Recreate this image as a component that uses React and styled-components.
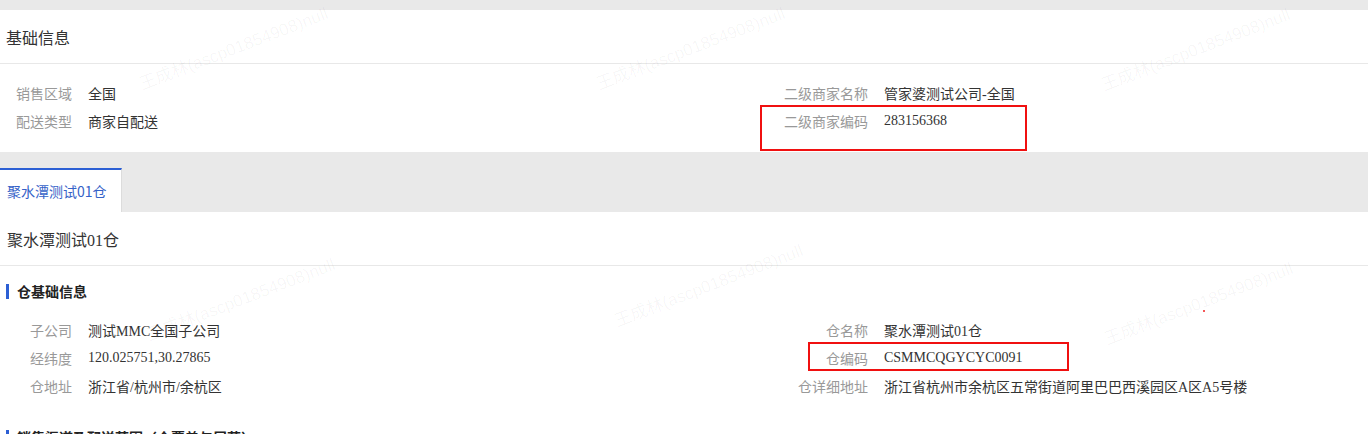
import React from "react";
import styled, { createGlobalStyle } from "styled-components";

const GlobalStyle = createGlobalStyle`
  html, body { margin: 0; padding: 0; }
  body {
    background: #e9e9e9;
    font-family: "Noto Sans CJK SC", "Liberation Sans", sans-serif;
    color: #333;
    overflow: hidden;
  }
`;

const Page = styled.div`
  position: relative;
  padding-top: 10px;
  width: 1368px;
  height: 434px;
  box-sizing: border-box;
  overflow: hidden;
`;

const Card = styled.section`
  background: #fff;
`;

const CardHeader = styled.div`
  height: 53px;
  display: flex;
  align-items: center;
  padding-left: ${(p) => p.$pl || 6}px;
  border-bottom: 1px solid #e8e8e8;
  font-size: 16px;
  font-family: ${(p) =>
    p.$serif
      ? `"Liberation Serif", "Noto Sans CJK SC", serif`
      : `"Noto Sans CJK SC", "Liberation Sans", sans-serif`};
  color: #333;
`;

const InfoGrid = styled.div`
  display: grid;
  grid-template-columns: 684px 684px;
  padding: ${(p) => p.$pt ?? 15}px 0 ${(p) => p.$pb ?? 17}px;
`;

const Column = styled.div`
  display: flex;
  flex-direction: column;
`;

const Item = styled.div`
  display: flex;
  height: 28px;
  align-items: center;
  gap: 16px;
  font-size: 14px;
`;

const Label = styled.span`
  width: ${(p) => p.$w}px;
  flex: none;
  text-align: right;
  color: #999;
  white-space: nowrap;
  font-family: "Noto Sans CJK SC", "Liberation Sans", sans-serif;
`;

const Value = styled.span`
  color: #333;
  white-space: nowrap;
  font-family: "Liberation Serif", "Noto Sans CJK SC", serif;
`;

const TabBar = styled.div`
  height: 60px;
  display: flex;
  align-items: flex-end;
  background: #e9e9e9;
`;

const Tab = styled.div`
  background: #fff;
  border-top: 2px solid #2c5fd4;
  border-right: 1px solid #dcdcdc;
  display: flex;
  align-items: center;
  padding-left: 7px;
  box-sizing: border-box;
  width: 122px;
  height: 44px;
  font-size: 14px;
  color: #3562c8;
  font-family: "Noto Sans CJK SC", "Liberation Sans", sans-serif;
`;

const SectionTitle = styled.div`
  display: flex;
  align-items: center;
  gap: 8px;
  height: 20px;
  margin-top: ${(p) => p.$mt}px;
  padding-left: 6px;
  font-size: 14px;
  font-weight: 700;
  color: #222;
  &::before {
    content: "";
    width: 3px;
    height: 15px;
    background: #2c5fd4;
  }
`;

const Mark = styled.div`
  position: absolute;
  pointer-events: none;
  transform: translate(-50%, -50%) rotate(-21deg);
  font-family: "Liberation Sans", "Noto Sans CJK SC", sans-serif;
  font-size: 17px;
  color: rgba(0, 0, 0, 0.04);
  white-space: nowrap;
`;

const Highlight = styled.div`
  position: absolute;
  pointer-events: none;
  border: 2px solid #f01010;
  box-sizing: border-box;
`;

const Dot = styled.div`
  position: absolute;
  width: 2px;
  height: 2px;
  background: #f02020;
  border-radius: 1px;
`;

const marks = [
  [233, 47],
  [690, 47],
  [1195, 48],
  [240, 298],
  [708, 284],
  [1198, 302],
];

export default function App() {
  return (
    <>
      <GlobalStyle />
      <Page>
        <Card>
          <CardHeader>基础信息</CardHeader>
          <InfoGrid>
            <Column>
              <Item>
                <Label $w={72}>销售区域</Label>
                <Value>全国</Value>
              </Item>
              <Item>
                <Label $w={72}>配送类型</Label>
                <Value>商家自配送</Value>
              </Item>
            </Column>
            <Column>
              <Item>
                <Label $w={184}>二级商家名称</Label>
                <Value>管家婆测试公司-全国</Value>
              </Item>
              <Item>
                <Label $w={184}>二级商家编码</Label>
                <Value>283156368</Value>
              </Item>
            </Column>
          </InfoGrid>
        </Card>
        <TabBar>
          <Tab>聚水潭测试01仓</Tab>
        </TabBar>
        <Card>
          <CardHeader $pl={7} $serif>
            聚水潭测试01仓
          </CardHeader>
          <SectionTitle $mt={15}>仓基础信息</SectionTitle>
          <InfoGrid $pt={15} $pb={0}>
            <Column>
              <Item>
                <Label $w={72}>子公司</Label>
                <Value>测试MMC全国子公司</Value>
              </Item>
              <Item>
                <Label $w={72}>经纬度</Label>
                <Value>120.025751,30.27865</Value>
              </Item>
              <Item>
                <Label $w={72}>仓地址</Label>
                <Value>浙江省/杭州市/余杭区</Value>
              </Item>
            </Column>
            <Column>
              <Item>
                <Label $w={184}>仓名称</Label>
                <Value>聚水潭测试01仓</Value>
              </Item>
              <Item>
                <Label $w={184}>仓编码</Label>
                <Value>CSMMCQGYCYC0091</Value>
              </Item>
              <Item>
                <Label $w={184}>仓详细地址</Label>
                <Value>浙江省杭州市余杭区五常街道阿里巴巴西溪园区A区A5号楼</Value>
              </Item>
            </Column>
          </InfoGrid>
          <SectionTitle $mt={27}>销售渠道及配送范围（仓覆盖与屏蔽）</SectionTitle>
        </Card>

        {marks.map(([x, y], i) => (
          <Mark key={i} style={{ left: x, top: y }}>
            王成林(ascp01854908)null
          </Mark>
        ))}
        <Highlight style={{ left: 760, top: 105, width: 267, height: 46 }} />
        <Highlight style={{ left: 808, top: 342, width: 261, height: 29 }} />
        <Dot style={{ left: 1203, top: 310 }} />
      </Page>
    </>
  );
}
